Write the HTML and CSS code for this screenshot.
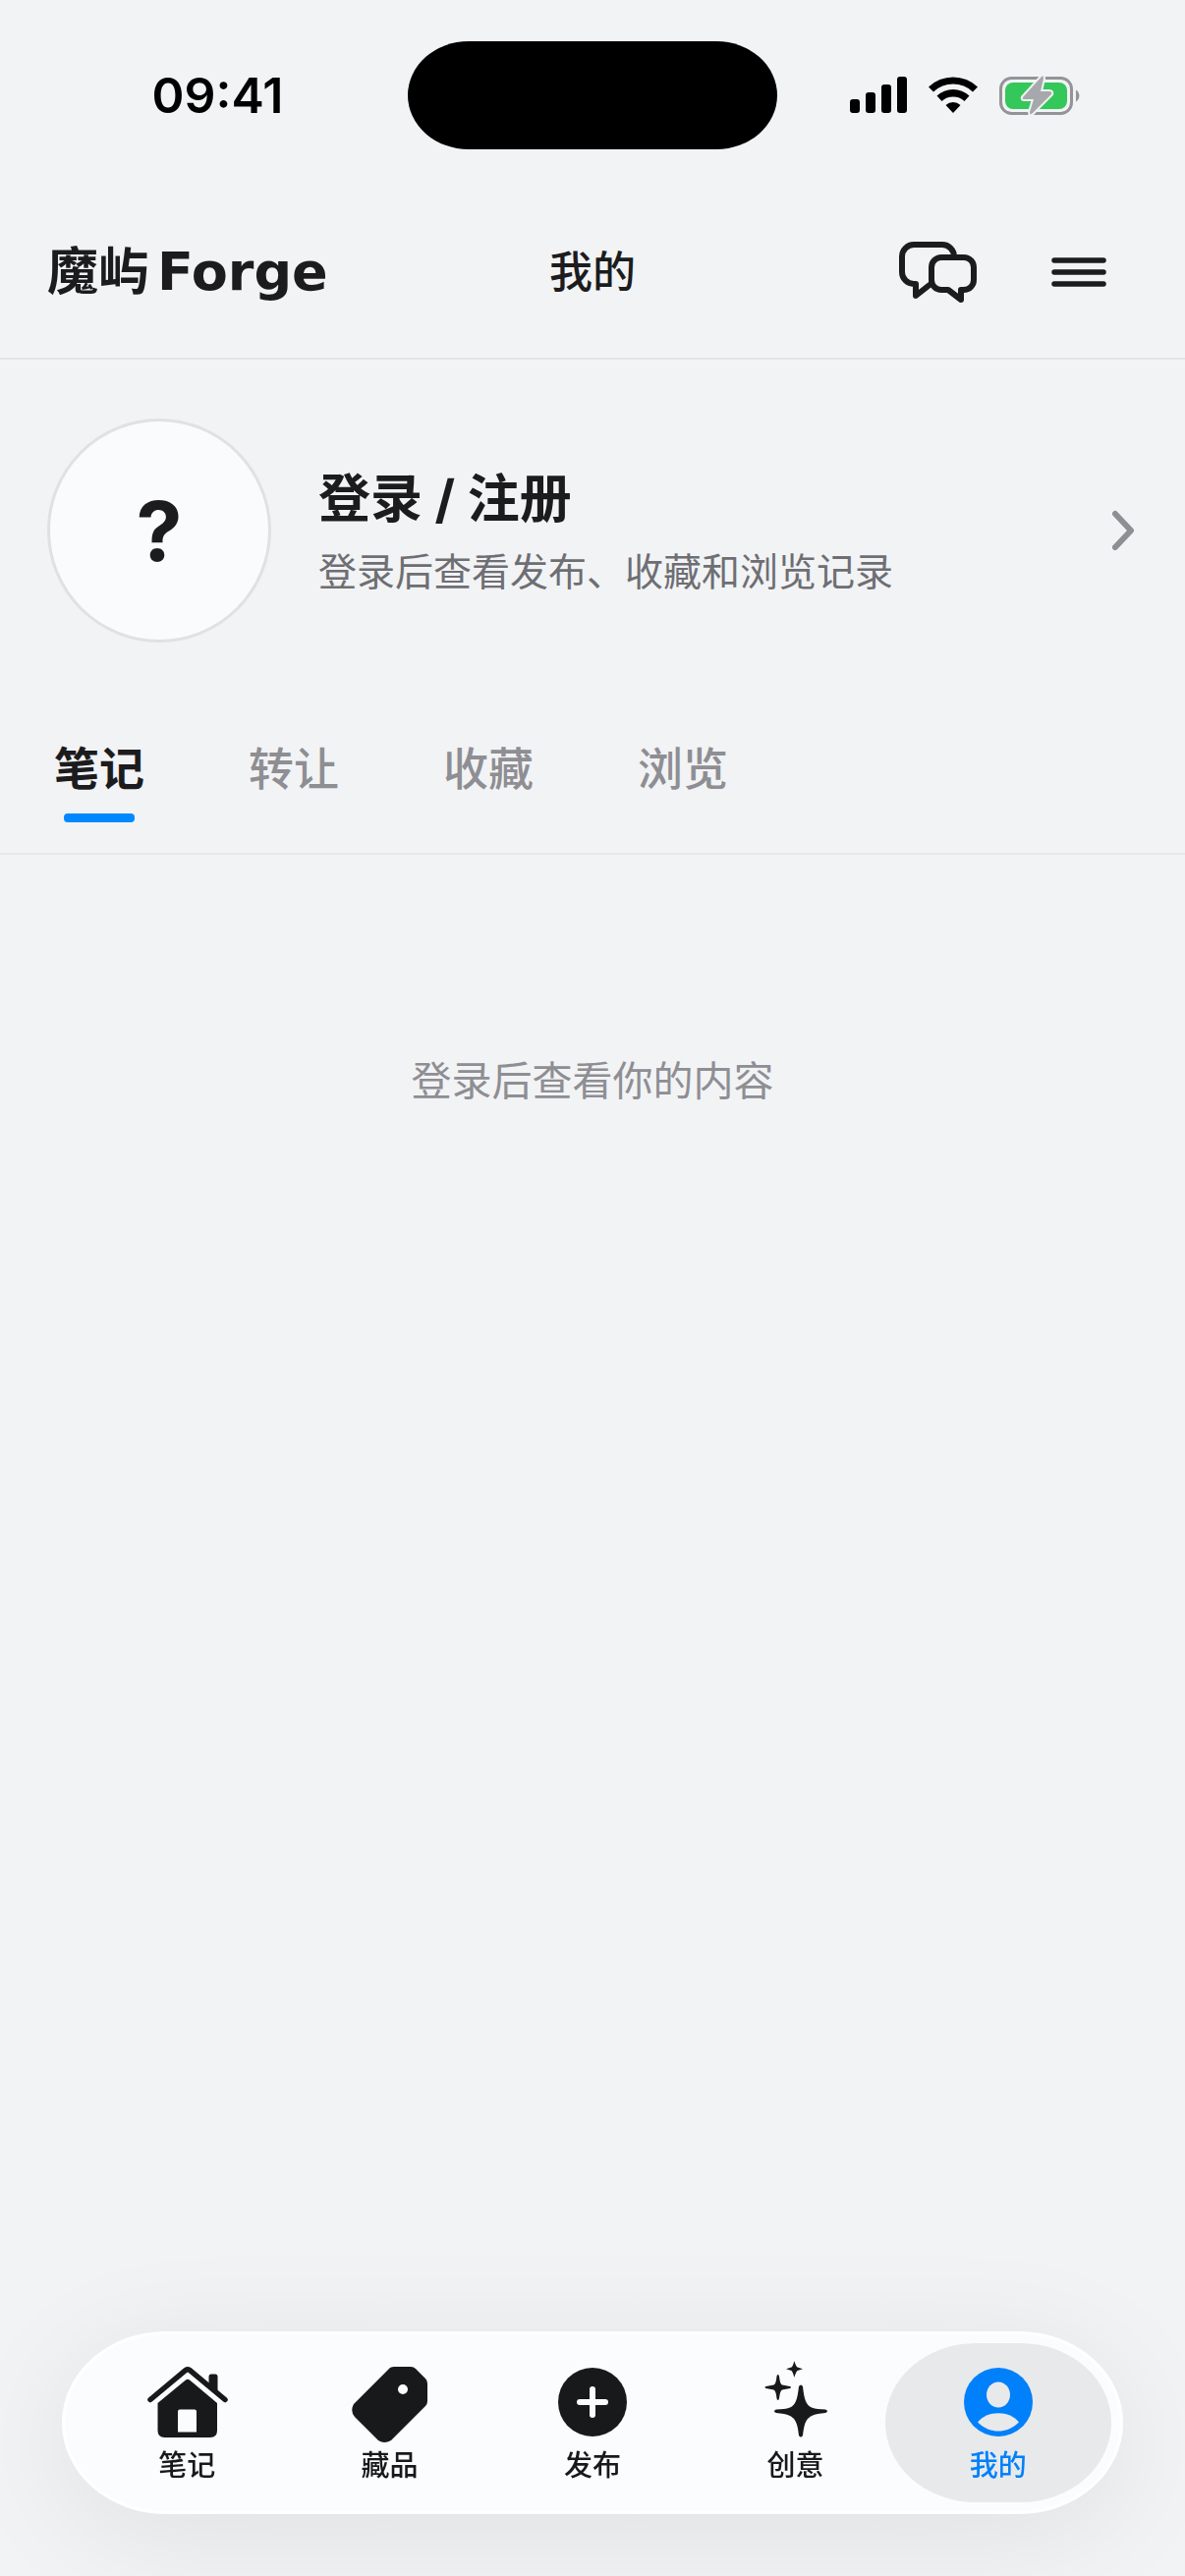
FILE: index.html
```html
<!DOCTYPE html>
<html lang="zh-CN">
<head>
    <meta charset="UTF-8">
    <meta name="viewport" content="width=device-width, initial-scale=1.0">
    <title>魔屿 Forge - 我的</title>
    <link rel="stylesheet" href="styles.css">
</head>
<body>

    <!-- 状态栏 -->
    <div class="status-bar">
        <div class="status-time">09:41</div>
        <div class="island"></div>
        <div class="status-icons">
            <svg width="58" height="38" viewBox="0 0 58 38">
                <rect x="0" y="23" width="10" height="14" rx="3"/>
                <rect x="16" y="16" width="10" height="21" rx="3"/>
                <rect x="32" y="8" width="10" height="29" rx="3"/>
                <rect x="48" y="0" width="10" height="37" rx="3"/>
            </svg>
            <svg width="50" height="38" viewBox="0 0 50 38">
                <path d="M0 10.500A36 36 0 0 1 50 10.500L45 15.500A29 29 0 0 0 5 15.500Z"/>
                <path d="M8.500 19.500A24 24 0 0 1 41.500 19.500L36.500 25A17 17 0 0 0 13.500 25Z"/>
                <path d="M17.500 29A11 11 0 0 1 32.500 29L25 37Z"/>
            </svg>
            <svg width="82" height="42" viewBox="0 0 82 42">
                <rect x="1.500" y="3.500" width="72" height="36" rx="11" fill="none" stroke="#949498" stroke-width="3"/>
                <path d="M78 15.500a7 7 0 0 1 0 12z" fill="#949498"/>
                <rect x="6" y="8" width="63" height="27" rx="8" fill="#34c759"/>
                <path d="M43 2L24 23Q23 25 25.500 25H35L31 38Q31 42 34 39L53 20Q54 17 51 17H42L45 4Q45 0 43 2Z" fill="#a7a8ab" stroke="#f2f3f5" stroke-width="4" paint-order="stroke"/>
            </svg>
        </div>
    </div>

    <header class="header">
        <div class="logo">魔屿<span class="logo-en">Forge</span></div>
        <h1 class="page-title">我的</h1>
        <div class="header-actions">
            <button class="icon-btn" aria-label="消息">
                <svg width="84" height="66" viewBox="0 0 84 66">
                    <path d="M59 17A12 12 0 0 0 47 5H18A12 12 0 0 0 6 17V33A12 12 0 0 0 18 45H20V57L34 46"/>
                    <path d="M46 18H69A10 10 0 0 1 79 28V41A10 10 0 0 1 69 51H66V61L53 51H46A10 10 0 0 1 36 41V28A10 10 0 0 1 46 18Z"/>
                </svg>
            </button>
            <button class="icon-btn" aria-label="菜单">
                <svg width="56" height="30" viewBox="0 0 56 30">
                    <path d="M3 3H53M3 15H53M3 27H53" stroke-width="5.500"/>
                </svg>
            </button>
        </div>
    </header>

    <main>
        <a class="profile" href="#login">
            <span class="avatar">?</span>
            <span class="profile-text">
                <span class="profile-name">登录 / 注册</span>
                <span class="profile-desc">登录后查看发布、收藏和浏览记录</span>
            </span>
            <svg class="chevron" width="26" height="42" viewBox="0 0 26 42">
                <path d="M3 4L19 21L3 38"/>
            </svg>
        </a>

        <div class="tabs">
            <button class="tab active">笔记</button>
            <button class="tab">转让</button>
            <button class="tab">收藏</button>
            <button class="tab">浏览</button>
        </div>

        <p class="empty">登录后查看你的内容</p>
    </main>

    <!-- 底部导航 -->
    <nav class="tab-bar">
        <a class="bar-item" href="#notes">
            <svg width="84" height="84" viewBox="0 0 84 84">
                <g transform="translate(2 6)">
                    <path d="M3 33.500L39 3.500Q41 2 43 3.500L79 33.500" fill="none" stroke="#18191b" stroke-width="5.500" stroke-linecap="round"/>
                    <path d="M62.500 22V10Q62.500 7.500 65 7.500H69Q71.500 7.500 71.500 10V28Z"/>
                    <path fill-rule="evenodd" d="M39 13.500Q41 12 43 13.500L71 37V65Q71 72 64 72H17.500Q10.500 72 10.500 65V37ZM33 43.500Q31 43.500 31 45.500V66.500H50V45.500Q50 43.500 48 43.500Z"/>
                </g>
            </svg>
            <span>笔记</span>
        </a>
        <a class="bar-item" href="#items">
            <svg width="84" height="84" viewBox="0 0 84 84">
                <g transform="translate(3 6)">
                    <path fill-rule="evenodd" d="M43 0H60Q63 0 65 2L75 12Q77 14 77 17V35Q77 38 75 40L40 75Q33 79 27 75L3 51Q-2 45 2 38L37 3Q39 0 43 0ZM52 18A5 5 0 1 0 52 28A5 5 0 1 0 52 18Z"/>
                </g>
            </svg>
            <span>藏品</span>
        </a>
        <a class="bar-item" href="#publish">
            <svg width="84" height="84" viewBox="0 0 84 84">
                <circle cx="42" cy="42" r="35"/>
                <path d="M42 29V55M29 42H55" stroke="#fbfcfe" stroke-width="6" stroke-linecap="round"/>
            </svg>
            <span>发布</span>
        </a>
        <a class="bar-item" href="#ideas">
            <svg width="84" height="84" viewBox="0 0 84 84">
                <g transform="translate(11 0)">
                    <path d="M35 26Q37 23 39 26C40.500 40 42.500 45 48 47.500C52 49 56 49 62 49.500Q66 51 62 53C56 53.500 52 54 48 56C42.500 59 40.500 63 39 76Q37 79 35 76C33.500 63 31.500 59 26 56C22 54 18 53.500 12 53Q8 51 12 49.500C18 49 22 49 26 47.500C31.500 45 33.500 40 35 26Z"/>
                    <path d="M13.700 14Q15 14 15.300 18Q16 23.500 18 24.500L26 26Q28 27 26 28L18 29.500Q16 30.500 15.300 36Q15 40 13.700 40Q12.500 40 12.200 36Q11.500 30.500 9.500 29.500L1.500 28Q-0.500 27 1.500 26L9.500 24.500Q11.500 23.500 12.200 18Q12.500 14 13.700 14Z"/>
                    <path d="M30.300 0Q32 5.500 33.500 6.500L39 8.300L33.500 10Q32 11.500 30.300 17Q29 11.500 27.500 10L22 8.300L27.500 6.500Q29 5.500 30.300 0Z"/>
                </g>
            </svg>
            <span>创意</span>
        </a>
        <a class="bar-item active" href="#mine">
            <svg width="84" height="84" viewBox="0 0 84 84">
                <circle cx="42" cy="42" r="35"/>
                <ellipse cx="42" cy="34.500" rx="12" ry="13" fill="#e8e9eb"/>
                <path d="M21 62.500C30 50 54 50 63 62.500C51 74.500 33 74.500 21 62.500Z" fill="#e8e9eb"/>
            </svg>
            <span>我的</span>
        </a>
    </nav>

</body>
</html>
```
FILE: styles.css
```css
* {
    box-sizing: border-box;
}

body {
    font-family: Inter, "Noto Sans CJK SC", sans-serif;
    margin: 0;
    min-height: 100vh;
    background-color: #f2f3f5;
    color: #1c1c1e;
}

button {
    font-family: inherit;
    padding: 0;
    border: none;
    background: none;
    color: inherit;
    cursor: pointer;
}

a {
    color: inherit;
    text-decoration: none;
}

svg {
    display: block;
}

/* 状态栏 */
.status-bar {
    display: grid;
    grid-template-columns: 1fr 376px 1fr;
    align-items: center;
    justify-items: center;
    height: 186px;
    padding: 8px 28px 0;
    color: #000;
}

.status-time {
    font-size: 50px;
    font-weight: 600;
    line-height: 60px;
}

.island {
    width: 376px;
    height: 110px;
    border-radius: 62px / 55px;
    background-color: #000;
}

.status-icons {
    display: flex;
    align-items: center;
    gap: 22px;
    padding-right: 6px;
}

/* 顶部标题 */
.header {
    display: grid;
    grid-template-columns: 1fr auto 1fr;
    align-items: center;
    height: 180px;
    padding: 4px 48px 0;
    border-bottom: 2px solid #e4e5e7;
}

.logo {
    display: flex;
    align-items: center;
    gap: 8px;
    font-size: 52px;
    font-weight: 700;
    line-height: 60px;
}

.logo-en {
    font-family: "DejaVu Sans", sans-serif;
    font-size: 54px;
}

.page-title {
    margin: 0;
    font-size: 44px;
    font-weight: 500;
    line-height: 60px;
}

.header-actions {
    display: flex;
    justify-content: flex-end;
    gap: 24px;
}

.icon-btn {
    display: flex;
    align-items: center;
    justify-content: center;
    width: 120px;
    height: 120px;
}

.icon-btn svg,
.chevron {
    fill: none;
    stroke: #1c1c1e;
    stroke-width: 6;
    stroke-linecap: round;
    stroke-linejoin: round;
}

/* 登录入口 */
.profile {
    display: flex;
    align-items: center;
    gap: 48px;
    padding: 60px 48px;
}

.avatar {
    display: flex;
    align-items: center;
    justify-content: center;
    width: 228px;
    height: 228px;
    border: 3px solid #e1e1e3;
    border-radius: 50%;
    background-color: #fafbfd;
    font-size: 84px;
    font-weight: 700;
}

.profile-text {
    display: flex;
    flex: 1;
    flex-direction: column;
    gap: 8px;
    padding-top: 4px;
}

.profile-name {
    font-size: 53px;
    font-weight: 700;
    line-height: 72px;
}

.profile-desc {
    color: #6e6e73;
    font-size: 39px;
    line-height: 60px;
}

.profile .chevron {
    stroke: #8e8e93;
}

/* 内容分类 */
.tabs {
    display: flex;
    gap: 106px;
    padding: 38px 55px 31px;
    border-bottom: 2px solid #e7e8ea;
}

.tab {
    display: flex;
    flex-direction: column;
    align-items: center;
    gap: 16px;
    color: #8e8e93;
    font-size: 46px;
    font-weight: 500;
    line-height: 60px;
}

.tab::after {
    content: "";
    width: 72px;
    height: 9px;
    border-radius: 4px;
}

.tab.active {
    color: #1c1c1e;
    font-weight: 700;
}

.tab.active::after {
    background-color: #0088ff;
}

.empty {
    margin: 0;
    padding: 200px 48px 300px;
    color: #8e8e93;
    font-size: 41px;
    line-height: 60px;
    text-align: center;
}

/* 底部导航 */
.tab-bar {
    position: fixed;
    right: 63px;
    bottom: 63px;
    left: 63px;
    display: flex;
    padding: 9px 21px;
    border: 3px solid #fff;
    border-radius: 106px / 93px;
    background-color: #fbfcfe;
    box-shadow: 0 20px 120px rgba(0, 0, 0, 0.08);
}

.bar-item {
    position: relative;
    display: flex;
    flex: 1;
    flex-direction: column;
    align-items: center;
    gap: 2px;
    padding: 18px 0 16px;
    color: #18191b;
    fill: #18191b;
    font-size: 29px;
    font-weight: 500;
    line-height: 42px;
}

.bar-item svg,
.bar-item span {
    position: relative;
}

.bar-item.active {
    color: #0080fa;
    fill: #0080fa;
}

/* 选中背景比按钮略宽 */
.bar-item.active::before {
    content: "";
    position: absolute;
    inset: 0 -12px;
    border-radius: 92px / 81px;
    background-color: #e8e9eb;
}
```
